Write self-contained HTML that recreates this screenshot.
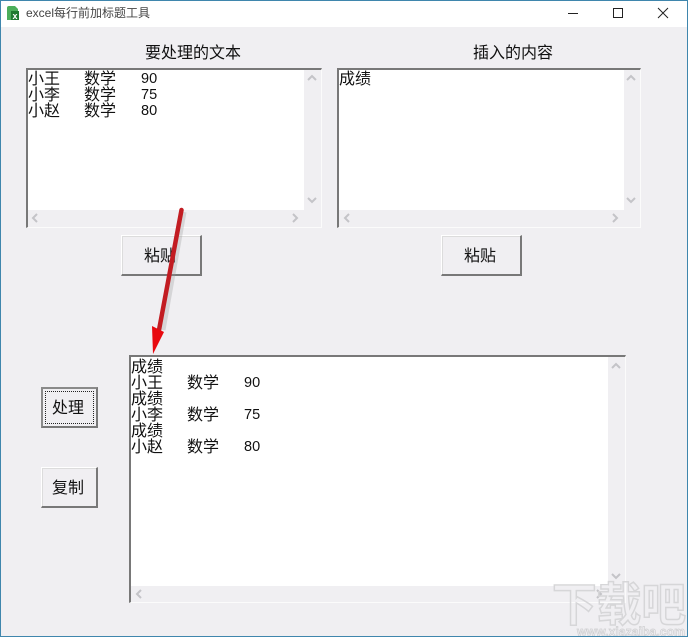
<!DOCTYPE html>
<html><head><meta charset="utf-8">
<style>
html,body{margin:0;padding:0}
body{width:688px;height:637px;overflow:hidden;position:relative;background:#f0eff2;font-family:"Liberation Sans","WenQuanYi Zen Hei",sans-serif;color:#000}
div{position:absolute;box-sizing:border-box}
.t{font-size:16px;line-height:16px;white-space:pre;font-family:"WenQuanYi Zen Hei","Noto Sans CJK SC",sans-serif;color:#111}
.n{font-family:"Liberation Sans",sans-serif;font-size:14.5px}
.box{border-top:2px solid #787878;border-left:2px solid #787878;border-right:1px solid #fbfbfb;border-bottom:1px solid #fbfbfb;background:#f0eff2}
.in{background:#fff}
.btn{background:#f0eff2;border-top:1px solid #fff;border-left:1px solid #fff;border-right:2px solid #787878;border-bottom:2px solid #787878;box-shadow:inset 1px 1px 0 #dcdcdc}
svg{position:absolute;overflow:visible}
</style></head>
<body>
<div style="left:0;top:0;width:688px;height:27px;background:#fff"></div>
<div style="left:0;top:0;width:688px;height:1px;background:#3f86ad"></div>
<div style="left:0;top:0;width:1px;height:637px;background:#3f86ad"></div>
<div style="left:687px;top:0;width:1px;height:637px;background:#3f86ad"></div>

<svg style="left:0;top:0" width="40" height="27"><path d="M7 8a2 2 0 0 1 2-2h6l3 3v11H7z" fill="#4cae5a"/><rect x="11" y="11" width="8" height="9" fill="#1f7a30"/><text x="12.500" y="19" font-size="9" font-family="Liberation Sans" font-weight="bold" fill="#fff">x</text></svg>
<div style="left:26px;top:6px;font-size:12px;line-height:15px;color:#444;white-space:pre;font-family:'Liberation Sans','Noto Sans CJK SC',sans-serif">excel每行前加标题工具</div>
<svg style="left:560px;top:0" width="120" height="27" fill="none" stroke="#222" stroke-width="1"><path d="M8 13.500h10"/><rect x="53.500" y="8.500" width="9" height="9"/><path d="M98 8l10 10M108 8l-10 10"/></svg>

<div class="t" style="left:145px;top:43px">要处理的文本</div>
<div class="t" style="left:473px;top:43px">插入的内容</div>

<!-- box 1 -->
<div class="box" style="left:26px;top:68px;width:296px;height:160px"></div>
<div class="in" style="left:28px;top:70px;width:276px;height:140px"></div>
<div class="t" style="left:28px;top:69px">小王</div><div class="t" style="left:84px;top:69px">数学</div><div class="t n" style="left:141px;top:71px">90</div>
<div class="t" style="left:28px;top:85px">小李</div><div class="t" style="left:84px;top:85px">数学</div><div class="t n" style="left:141px;top:87px">75</div>
<div class="t" style="left:28px;top:101px">小赵</div><div class="t" style="left:84px;top:101px">数学</div><div class="t n" style="left:141px;top:103px">80</div>

<!-- box 2 -->
<div class="box" style="left:337px;top:68px;width:304px;height:160px"></div>
<div class="in" style="left:339px;top:70px;width:285px;height:140px"></div>
<div class="t" style="left:339px;top:69px">成绩</div>

<div class="btn" style="left:121px;top:235px;width:81px;height:41px"></div>
<div class="t" style="left:144px;top:246px">粘贴</div>
<div class="btn" style="left:441px;top:235px;width:81px;height:41px"></div>
<div class="t" style="left:464px;top:246px">粘贴</div>

<!-- box 3 -->
<div class="box" style="left:129px;top:355px;width:497px;height:248px"></div>
<div class="in" style="left:131px;top:357px;width:477px;height:229px"></div>
<div class="t" style="left:131px;top:357px">成绩</div>
<div class="t" style="left:131px;top:373px">小王</div><div class="t" style="left:187px;top:373px">数学</div><div class="t n" style="left:244px;top:375px">90</div>
<div class="t" style="left:131px;top:389px">成绩</div>
<div class="t" style="left:131px;top:405px">小李</div><div class="t" style="left:187px;top:405px">数学</div><div class="t n" style="left:244px;top:407px">75</div>
<div class="t" style="left:131px;top:421px">成绩</div>
<div class="t" style="left:131px;top:437px">小赵</div><div class="t" style="left:187px;top:437px">数学</div><div class="t n" style="left:244px;top:439px">80</div>

<svg style="left:0;top:0" width="688" height="637" fill="none" stroke="#c4c4c8" stroke-width="2">
<path d="M308 80l4-4 4 4M308 198l4 4 4-4M37 214l-4 4 4 4M293 214l4 4-4 4"/>
<path d="M627 80l4-4 4 4M627 198l4 4 4-4M349 214l-4 4 4 4M613 214l4 4-4 4"/>
<path d="M612 368l4-4 4 4M612 574l4 4 4-4M141 590l-4 4 4 4M597 590l4 4-4 4"/>
</svg>

<div class="btn" style="left:41px;top:387px;width:57px;height:41px;border:2px solid #787878;border-top-color:#8a8a8a;border-left-color:#8a8a8a;box-shadow:none"></div>
<div style="left:45px;top:391px;width:49px;height:33px;border:1px dotted #222"></div>
<div class="t" style="left:52px;top:398px">处理</div>
<div class="btn" style="left:41px;top:467px;width:57px;height:41px"></div>
<div class="t" style="left:52px;top:478px">复制</div>

<!-- arrow -->
<svg style="left:0;top:0" width="688" height="637">
<path d="M184 212L163 330" stroke="#999" stroke-opacity=".3" stroke-width="5" fill="none"/>
<path d="M181.500 210L159 330" stroke="#c21c22" stroke-width="4.500" stroke-linecap="round" fill="none"/>
<path d="M152 326L164 332L153 354Z" fill="#e8090f"/>
</svg>

<!-- watermark -->
<svg style="left:0;top:0" width="688" height="637">
<text x="552" y="621" font-size="46" font-weight="bold" font-family="Noto Sans CJK SC,sans-serif" fill="none" stroke="#d6d6d8" stroke-width="1.500" textLength="134" lengthAdjust="spacingAndGlyphs">下载吧</text>
<text x="577" y="636" font-size="13" font-weight="bold" font-family="Liberation Sans,sans-serif" fill="#f0eff2" stroke="#cfcfd1" stroke-width=".7" textLength="108" lengthAdjust="spacingAndGlyphs">www.xiazaiba.com</text>
</svg>
<div style="left:0;top:636px;width:688px;height:1px;background:#3f86ad"></div>
</body></html>
